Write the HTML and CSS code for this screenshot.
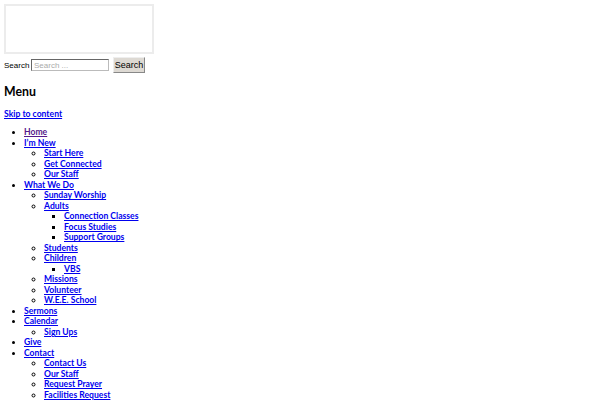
FILE: index.html
```html
<!DOCTYPE html>
<html>
<head>
<meta charset="utf-8">
<link rel="stylesheet" href="styles.css">
</head>
<body>
<div class="frame"></div>
<form class="search">
  <label class="search-label">Search</label>
  <input class="search-input" type="text" placeholder="Search ...">
  <button class="search-btn" type="button">Search</button>
</form>
<h2 class="menu-title">Menu</h2>
<a class="skip" href="#">Skip to content</a>
<ul class="nav l1">
  <li><a class="visited" href="#">Home</a></li>
  <li><a href="#">I’m New</a>
    <ul class="l2">
      <li><a href="#">Start Here</a></li>
      <li><a href="#">Get Connected</a></li>
      <li><a href="#">Our Staff</a></li>
    </ul>
  </li>
  <li><a href="#">What We Do</a>
    <ul class="l2">
      <li><a href="#">Sunday Worship</a></li>
      <li><a href="#">Adults</a>
        <ul class="l3">
          <li><a href="#">Connection Classes</a></li>
          <li><a href="#">Focus Studies</a></li>
          <li><a href="#">Support Groups</a></li>
        </ul>
      </li>
      <li><a href="#">Students</a></li>
      <li><a href="#">Children</a>
        <ul class="l3">
          <li><a href="#">VBS</a></li>
        </ul>
      </li>
      <li><a href="#">Missions</a></li>
      <li><a href="#">Volunteer</a></li>
      <li><a href="#">W.E.E. School</a></li>
    </ul>
  </li>
  <li><a href="#">Sermons</a></li>
  <li><a href="#">Calendar</a>
    <ul class="l2">
      <li><a href="#">Sign Ups</a></li>
    </ul>
  </li>
  <li><a href="#">Give</a></li>
  <li><a href="#">Contact</a>
    <ul class="l2">
      <li><a href="#">Contact Us</a></li>
      <li><a href="#">Our Staff</a></li>
      <li><a href="#">Request Prayer</a></li>
      <li><a href="#">Facilities Request</a></li>
    </ul>
  </li>
</ul>
</body>
</html>
```
FILE: styles.css
```css
html, body {
  margin: 0;
  padding: 0;
  background: #fff;
}
body {
  padding: 4px;
  font-family: "Lato", "Liberation Sans", sans-serif;
  color: #000;
}
.frame {
  width: 146px;
  height: 46px;
  border: 2px solid #ececec;
}
.search {
  display: flex;
  align-items: center;
  height: 16px;
  margin: 3px 0 0;
  font-family: "Liberation Sans", Arial, sans-serif;
  font-size: 8px;
}
.search-label {
  width: 27px;
  flex: none;
}
.search-input {
  box-sizing: border-box;
  width: 78px;
  height: 12px;
  padding: 0 2px;
  border: 1px solid #bbb;
  border-top-color: #666;
  border-left-color: #666;
  font-family: "Liberation Sans", Arial, sans-serif;
  font-size: 8px;
  margin: 0 4px 0 0;
}
.search-input::placeholder {
  color: #aaa;
}
.search-btn {
  box-sizing: border-box;
  width: 32px;
  height: 16px;
  padding: 0;
  background: #ddd9d3;
  border: 1px solid #888;
  border-top-color: #eee;
  border-left-color: #eee;
  font-family: "Liberation Sans", Arial, sans-serif;
  font-size: 9px;
  color: #000;
}
.menu-title {
  margin: 10px 0 0;
  font-size: 12.3px;
  line-height: 18px;
  font-weight: 700;
}
.skip {
  display: block;
  margin-top: 8px;
  font-size: 8.6px;
  line-height: 10px;
  font-weight: 700;
  color: #0000ee;
}
a {
  color: #0000ee;
  font-weight: 700;
}
a.visited {
  color: #551a8b;
}
ul {
  margin: 0;
  padding-left: 20px;
  list-style: disc;
}
.nav {
  margin-top: 8px;
  font-size: 8.6px;
  line-height: 10.52px;
}
.l2 { list-style: circle; }
.l3 { list-style: square; }
```
